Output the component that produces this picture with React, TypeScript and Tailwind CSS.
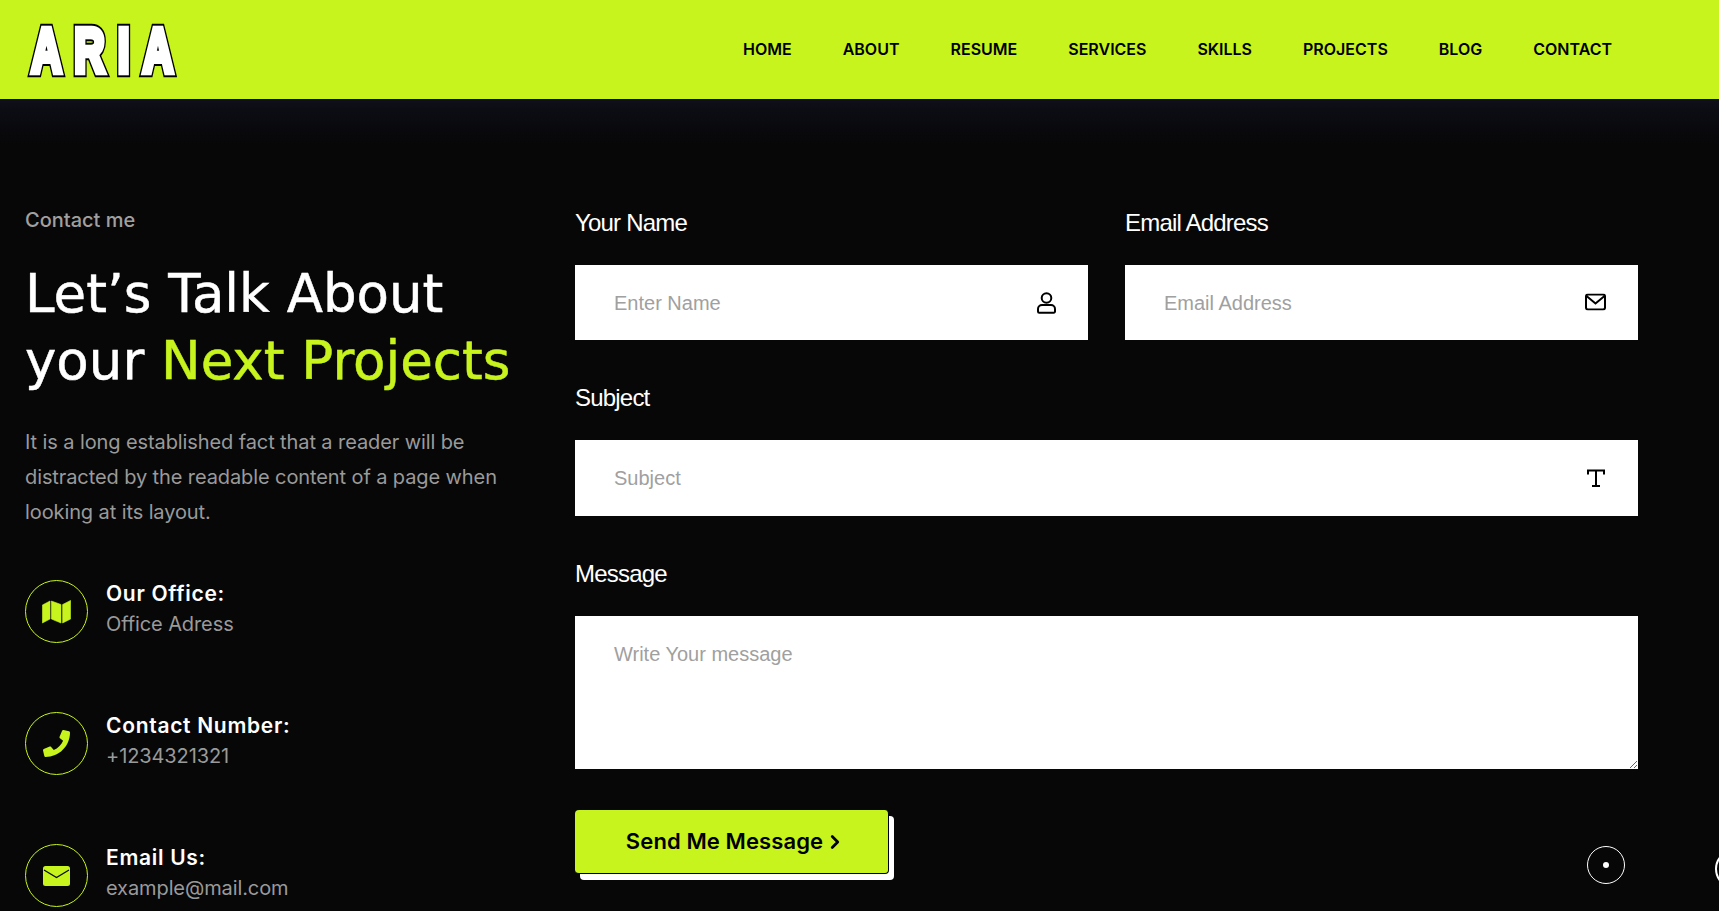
import { ChevronRight } from "lucide-react";
import { FaPhone } from "react-icons/fa";
import type { ReactNode } from "react";

const navLinks = ["Home", "About", "Resume", "Services", "Skills", "Projects", "Blog", "Contact"];

const Logo = () => (
  <svg className="overflow-visible" width="156" height="70" viewBox="0 0 156 70" aria-label="ARIA">
    <g fontFamily="'Liberation Sans', sans-serif" fontWeight="700" fontSize="63" textAnchor="middle" strokeMiterlimit="2.5">
      {[
        { c: "A", x: 20.5 },
        { c: "R", x: 63.5 },
        { c: "I", x: 97.5 },
        { c: "A", x: 132 },
      ].map((l, i) => (
        <g key={i} transform={`translate(${l.x} 62) scale(0.67 1)`}>
          <text stroke="#000" strokeWidth="10.5" strokeLinejoin="miter" fill="#000">{l.c}</text>
          <text stroke="#fff" strokeWidth="6.5" strokeLinejoin="miter" fill="#fff">{l.c}</text>
        </g>
      ))}
    </g>
  </svg>
);

const Header = () => (
  <header className="flex h-[99px] items-start justify-between bg-[#c8f41d] pl-[26px]">
    <div className="pt-[10px]">
      <Logo />
    </div>
    <nav className="flex gap-[51px] pr-[107px] pt-[38px]">
      {navLinks.map((link) => (
        <a key={link} href="#" className="text-[16px] font-semibold uppercase leading-[22px] text-black [font-family:Inter,sans-serif]">
          {link}
        </a>
      ))}
    </nav>
  </header>
);

const InfoRow = ({ icon, title, text }: { icon: ReactNode; title: string; text: string }) => (
  <div className="flex items-center gap-[18px]">
    <div className="flex h-[63px] w-[63px] items-center justify-center rounded-full border border-[#c8f41d] text-[#c8f41d]">
      {icon}
    </div>
    <div className="pb-[4px] [font-family:Inter,sans-serif]">
      <p className="text-[21px] font-semibold leading-[30px] tracking-[0.7px] text-white">{title}</p>
      <p className="text-[20px] leading-[31px] tracking-[-0.1px] text-[#9a9a9a]">{text}</p>
    </div>
  </div>
);

const Field = ({ label, placeholder, icon, tall }: { label: string; placeholder: string; icon: ReactNode; tall?: boolean }) => (
  <div>
    <label className="mb-[28px] block text-[24px] leading-[28px] tracking-[-0.8px] text-white">{label}</label>
    <div className="relative">
      <input
        placeholder={placeholder}
        className={`${tall ? "h-[76px]" : "h-[75px]"} w-full bg-white pl-[39px] pr-[60px] pt-[1px] text-[20px] outline-none placeholder:text-[#a0a0a0]`}
      />
      <span className="absolute right-[32px] top-1/2 -translate-y-1/2 text-black">{icon}</span>
    </div>
  </div>
);

const UserIcon = () => (
  <svg className="block" width="19" height="22" viewBox="0 0 19 22" fill="none" stroke="#000" strokeWidth="2">
    <circle cx="9.5" cy="6" r="4.8" />
    <path d="M5 13h9a4 4 0 0 1 4 4v2.5a1.2 1.2 0 0 1-1.2 1.2H2.2A1.2 1.2 0 0 1 1 19.5V17a4 4 0 0 1 4-4Z" />
  </svg>
);

const MailIcon = () => (
  <svg className="block -translate-y-[1px]" width="21" height="17" viewBox="0 0 21 17" fill="none" stroke="#000" strokeWidth="2">
    <rect x="1" y="1" width="19" height="15" rx="2" />
    <path d="M1.5 2.5 10.5 10l9-7.5" />
  </svg>
);

const SerifTIcon = () => (
  <svg className="block" width="20" height="20" viewBox="0 0 20 20" fill="none" stroke="#000" strokeWidth="2">
    <path d="M2 6.5V2.5h16v4M10 2.5V18M6 18h8" />
  </svg>
);

const MapIcon = () => (
  <svg width="29" height="24" viewBox="0 0 29 24" fill="currentColor" stroke="currentColor" strokeWidth="0.6" strokeLinejoin="round">
    <path d="M0.4 5 8 1v18l-7.6 4Z" />
    <path d="M9.4 1 19 4.5V23l-9.6-4Z" />
    <path d="M20.6 4.5 28.6 0.4V19l-8 4Z" />
  </svg>
);

const EnvelopeIcon = () => (
  <svg width="27" height="20" viewBox="0 0 27 20">
    <rect width="27" height="20" rx="2.5" fill="currentColor" />
    <path d="M1 4 13.5 11.5 26 4" fill="none" stroke="#070708" strokeWidth="1.2" />
  </svg>
);

const App = () => {
  return (
    <div className="relative h-[911px] overflow-hidden bg-[#070708] [font-family:'Liberation_Sans',Arial,sans-serif]">
      <Header />
      <div className="absolute inset-x-0 top-[99px] h-[45px] bg-gradient-to-b from-[#0e0f18] to-[#070708]" />

      <main className="relative flex pl-[25px] pr-[81px]">
        {/* left column */}
        <section className="w-[550px] shrink-0 pt-[108px] [font-family:Inter,sans-serif]">
          <p className="text-[20px] font-medium leading-[26px] text-[#a0a0a0]">Contact me</p>
          <h1 className="mt-[27px] text-[53px] font-normal leading-[67px] text-white [-webkit-text-stroke:0.5px_currentColor] [font-family:'DejaVu_Sans',sans-serif]">
            Let’s Talk About
            <br />
            your <span className="text-[#c8f41d]">Next Projects</span>
          </h1>
          <p className="mt-[31px] w-[490px] text-[20px] leading-[35px] tracking-[-0.1px] text-[#9a9a9a]">
            It is a long established fact that a reader will be distracted by the readable content of a page when
            looking at its layout.
          </p>
          <div className="mt-[49px] flex flex-col gap-[67px]">
            <InfoRow icon={<MapIcon />} title="Our Office:" text="Office Adress" />
            <InfoRow icon={<FaPhone size={27} />} title="Contact Number:" text="+1234321321" />
            <InfoRow icon={<EnvelopeIcon />} title="Email Us:" text="example@mail.com" />
          </div>
        </section>

        {/* form */}
        <form className="flex-1 pt-[110px]">
          <div className="grid grid-cols-2 gap-x-[37px]">
            <Field label="Your Name" placeholder="Enter Name" icon={<UserIcon />} />
            <Field label="Email Address" placeholder="Email Address" icon={<MailIcon />} />
          </div>
          <div className="mt-[44px]">
            <Field label="Subject" placeholder="Subject" tall icon={<SerifTIcon />} />
          </div>
          <div className="mt-[44px]">
            <label className="mb-[28px] block text-[24px] leading-[28px] tracking-[-0.8px] text-white">Message</label>
            <textarea
              placeholder="Write Your message"
              className="block h-[153px] w-full bg-white px-[39px] pt-[23px] text-[20px] outline-none placeholder:text-[#a0a0a0]"
            />
          </div>
          <button
            type="button"
            className="mt-[41px] flex h-[64px] w-[314px] items-center justify-center gap-[1px] rounded-[4px] border-b border-r border-black bg-[#c8f41d] pl-[9px] text-[22px] font-semibold tracking-[0.1px] text-black shadow-[5px_6px_0_0_#fff] [font-family:Inter,sans-serif]"
          >
            Send Me Message
            <ChevronRight size={22} strokeWidth={3} />
          </button>
        </form>
      </main>

      {/* cursor + scroll-top ring */}
      <div className="absolute left-[1587px] top-[846px] flex h-[38px] w-[38px] items-center justify-center rounded-full border border-white">
        <span className="h-[6px] w-[6px] rounded-full bg-white" />
      </div>
      <div className="absolute left-[1715px] top-[849px] h-[40px] w-[40px] rounded-full border-2 border-white" />
    </div>
  );
};

export default App;
